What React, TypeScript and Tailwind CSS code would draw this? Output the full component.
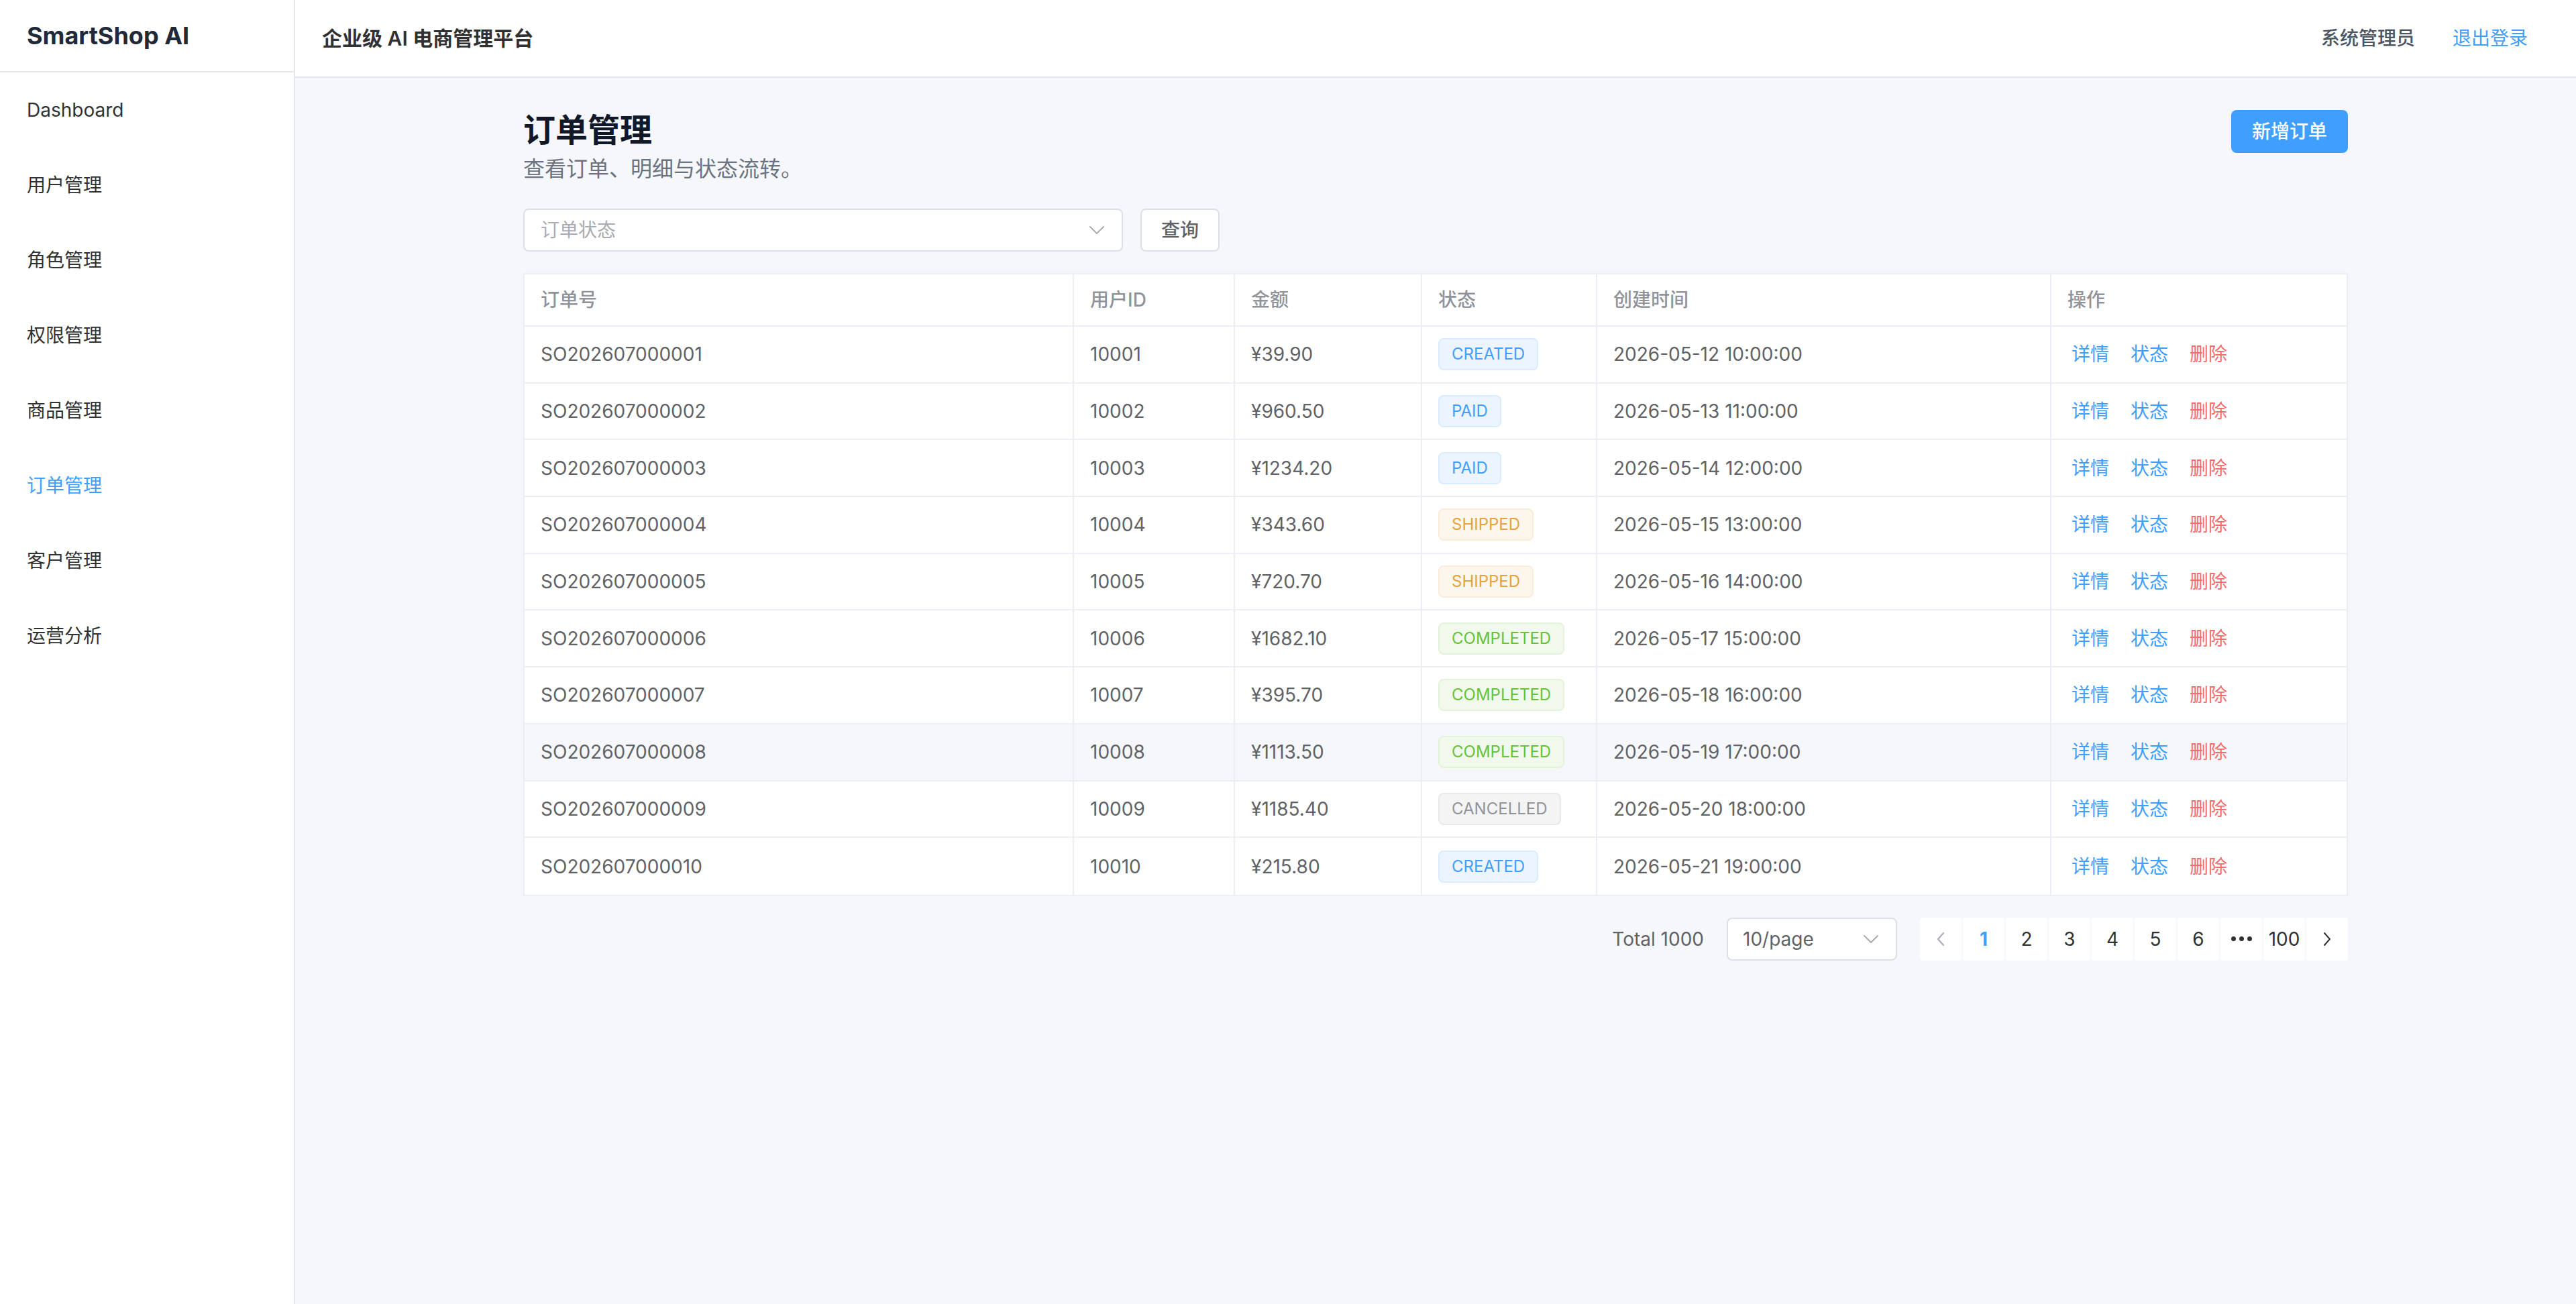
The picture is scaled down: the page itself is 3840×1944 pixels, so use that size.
import React from "react";

const FONT = { fontFamily: '"Inter", "Noto Sans CJK SC", sans-serif' };

type Status = "CREATED" | "PAID" | "SHIPPED" | "COMPLETED" | "CANCELLED";

const rows: { id: string; uid: string; amount: string; status: Status; time: string }[] = [
  { id: "SO202607000001", uid: "10001", amount: "¥39.90", status: "CREATED", time: "2026-05-12 10:00:00" },
  { id: "SO202607000002", uid: "10002", amount: "¥960.50", status: "PAID", time: "2026-05-13 11:00:00" },
  { id: "SO202607000003", uid: "10003", amount: "¥1234.20", status: "PAID", time: "2026-05-14 12:00:00" },
  { id: "SO202607000004", uid: "10004", amount: "¥343.60", status: "SHIPPED", time: "2026-05-15 13:00:00" },
  { id: "SO202607000005", uid: "10005", amount: "¥720.70", status: "SHIPPED", time: "2026-05-16 14:00:00" },
  { id: "SO202607000006", uid: "10006", amount: "¥1682.10", status: "COMPLETED", time: "2026-05-17 15:00:00" },
  { id: "SO202607000007", uid: "10007", amount: "¥395.70", status: "COMPLETED", time: "2026-05-18 16:00:00" },
  { id: "SO202607000008", uid: "10008", amount: "¥1113.50", status: "COMPLETED", time: "2026-05-19 17:00:00" },
  { id: "SO202607000009", uid: "10009", amount: "¥1185.40", status: "CANCELLED", time: "2026-05-20 18:00:00" },
  { id: "SO202607000010", uid: "10010", amount: "¥215.80", status: "CREATED", time: "2026-05-21 19:00:00" },
];

const tagClass: Record<Status, string> = {
  CREATED: "bg-[#ecf5ff] border-[#d9ecff] text-[#409eff]",
  PAID: "bg-[#ecf5ff] border-[#d9ecff] text-[#409eff]",
  SHIPPED: "bg-[#fdf6ec] border-[#faecd8] text-[#e6a23c]",
  COMPLETED: "bg-[#f0f9eb] border-[#e1f3d8] text-[#67c23a]",
  CANCELLED: "bg-[#f4f4f5] border-[#e9e9eb] text-[#909399]",
};

const menu = ["Dashboard", "用户管理", "角色管理", "权限管理", "商品管理", "订单管理", "客户管理", "运营分析"];

function ChevronDown({ className }: { className?: string }) {
  return (
    <svg className={className} width="22" height="12" viewBox="0 0 22 12" fill="none">
      <path d="M1 1 L11 11 L21 1" stroke="currentColor" strokeWidth="2" strokeLinecap="round" strokeLinejoin="round" />
    </svg>
  );
}

function Chevron({ dir, className }: { dir: "l" | "r"; className?: string }) {
  return (
    <svg className={className} width="12" height="20" viewBox="0 0 12 20" fill="none">
      {dir === "l" ? (
        <path d="M10 1 L2 10 L10 19" stroke="currentColor" strokeWidth="2" strokeLinecap="round" strokeLinejoin="round" />
      ) : (
        <path d="M2 1 L10 10 L2 19" stroke="currentColor" strokeWidth="2" strokeLinecap="round" strokeLinejoin="round" />
      )}
    </svg>
  );
}

const cols = ["w-[819px]", "w-[240px]", "w-[279px]", "w-[261px]", "w-[677px]", "w-[440px]"];

export default function App() {
  return (
    <div className="flex h-[1944px] w-full bg-[#f5f7fa]" style={FONT}>
      <aside className="flex w-[440px] shrink-0 flex-col border-r-2 border-[#e4e7ed] bg-white">
        <div className="flex h-[108px] items-center border-b-2 border-[#e4e7ed] px-[40px] text-[36px] font-bold text-[#1f2937]">
          SmartShop AI
        </div>
        <nav className="flex flex-col">
          {menu.map((m) => (
            <div
              key={m}
              className={
                m === "订单管理"
                  ? "flex h-[112px] items-center px-[40px] text-[28px] text-[#409eff]"
                  : "flex h-[112px] items-center px-[40px] text-[28px] text-[#303133]"
              }
            >
              {m}
            </div>
          ))}
        </nav>
      </aside>

      <div className="flex min-w-0 flex-1 flex-col">
        <header className="flex h-[116px] shrink-0 items-center justify-between border-b-2 border-[#e4e7ed] bg-white pl-[40px] pr-[72px]">
          <div className="text-[30px] font-semibold text-[#303133]">企业级 AI 电商管理平台</div>
          <div className="flex items-center gap-[56px] text-[28px]">
            <span className="font-medium text-[#4b5563]">系统管理员</span>
            <span className="text-[#409eff]">退出登录</span>
          </div>
        </header>

        <main className="flex-1 pt-[48px]">
          <div className="mx-auto w-[2720px]">
            <div className="flex items-start justify-between">
              <div>
                <h1 className="text-[48px] font-bold leading-[60px] text-[#111827]">订单管理</h1>
                <p className="mt-[5px] text-[32px] leading-[45px] text-[#6b7280]">查看订单、明细与状态流转。</p>
              </div>
              <button className="flex h-[64px] w-[174px] items-center justify-center rounded-[8px] bg-[#409eff] text-[28px] font-medium text-white">
                新增订单
              </button>
            </div>

            <div className="mt-[37px] flex items-center gap-[26px]">
              <div className="flex h-[64px] w-[894px] items-center justify-between rounded-[8px] border-2 border-[#dcdfe6] bg-white pl-[24px] pr-[26px]">
                <span className="text-[28px] text-[#a8abb2]">订单状态</span>
                <ChevronDown className="text-[#a8abb2]" />
              </div>
              <button className="flex h-[64px] w-[118px] items-center justify-center rounded-[8px] border-2 border-[#dcdfe6] bg-white text-[28px] font-medium text-[#606266]">
                查询
              </button>
            </div>

            <div className="mt-[32px] border-2 border-[#ebeef5] bg-white">
              <div className="flex h-[78px] border-b-2 border-[#ebeef5] text-[28px] font-medium text-[#909399]">
                {["订单号", "用户ID", "金额", "状态", "创建时间", "操作"].map((h, i) => (
                  <div
                    key={h}
                    className={`${cols[i]} flex shrink-0 items-center pl-[24px] ${i < 5 ? "border-r-2 border-[#ebeef5]" : ""}`}
                  >
                    {h}
                  </div>
                ))}
              </div>
              {rows.map((r, idx) => (
                <div
                  key={r.id}
                  className={`flex h-[84.7px] text-[28px] text-[#606266] ${idx < rows.length - 1 ? "border-b-2 border-[#ebeef5]" : ""} ${
                    idx === 7 ? "bg-[#f5f7fa]" : ""
                  }`}
                >
                  <div className={`${cols[0]} flex shrink-0 items-center border-r-2 border-[#ebeef5] pl-[24px]`}>{r.id}</div>
                  <div className={`${cols[1]} flex shrink-0 items-center border-r-2 border-[#ebeef5] pl-[24px]`}>{r.uid}</div>
                  <div className={`${cols[2]} flex shrink-0 items-center border-r-2 border-[#ebeef5] pl-[24px]`}>{r.amount}</div>
                  <div className={`${cols[3]} flex shrink-0 items-center border-r-2 border-[#ebeef5] pl-[24px]`}>
                    <span
                      className={`flex h-[48px] items-center rounded-[8px] border-2 px-[18px] text-[24px] ${tagClass[r.status]}`}
                    >
                      {r.status}
                    </span>
                  </div>
                  <div className={`${cols[4]} flex shrink-0 items-center border-r-2 border-[#ebeef5] pl-[24px]`}>{r.time}</div>
                  <div className={`${cols[5]} flex shrink-0 items-center gap-[32px] pl-[30px]`}>
                    <span className="text-[#409eff]">详情</span>
                    <span className="text-[#409eff]">状态</span>
                    <span className="text-[#f56c6c]">删除</span>
                  </div>
                </div>
              ))}
            </div>

            <div className="mt-[32px] flex items-center justify-end">
              <span className="text-[28px] text-[#606266]">Total 1000</span>
              <div className="ml-[34px] flex h-[64px] w-[254px] items-center justify-between rounded-[8px] border-2 border-[#dcdfe6] bg-white pl-[22px] pr-[26px]">
                <span className="text-[28px] text-[#606266]">10/page</span>
                <ChevronDown className="text-[#a8abb2]" />
              </div>
              <div className="ml-[34px] flex h-[64px] gap-[2px]">
                <div className="flex w-[62px] items-center justify-center rounded-[4px] bg-white text-[#a8abb2]">
                  <Chevron dir="l" />
                </div>
                {["1", "2", "3", "4", "5", "6"].map((p) => (
                  <div
                    key={p}
                    className={
                      p === "1"
                        ? "flex w-[62px] items-center justify-center rounded-[4px] bg-white text-[28px] font-bold text-[#409eff]"
                        : "flex w-[62px] items-center justify-center rounded-[4px] bg-white text-[28px] text-[#303133]"
                    }
                  >
                    {p}
                  </div>
                ))}
                <div className="flex w-[62px] items-center justify-center gap-[5px] rounded-[4px] bg-white">
                  <span className="h-[7px] w-[7px] rounded-full bg-[#303133]" />
                  <span className="h-[7px] w-[7px] rounded-full bg-[#303133]" />
                  <span className="h-[7px] w-[7px] rounded-full bg-[#303133]" />
                </div>
                <div className="flex w-[62px] items-center justify-center rounded-[4px] bg-white text-[28px] text-[#303133]">100</div>
                <div className="flex w-[62px] items-center justify-center rounded-[4px] bg-white text-[#303133]">
                  <Chevron dir="r" />
                </div>
              </div>
            </div>
          </div>
        </main>
      </div>
    </div>
  );
}
